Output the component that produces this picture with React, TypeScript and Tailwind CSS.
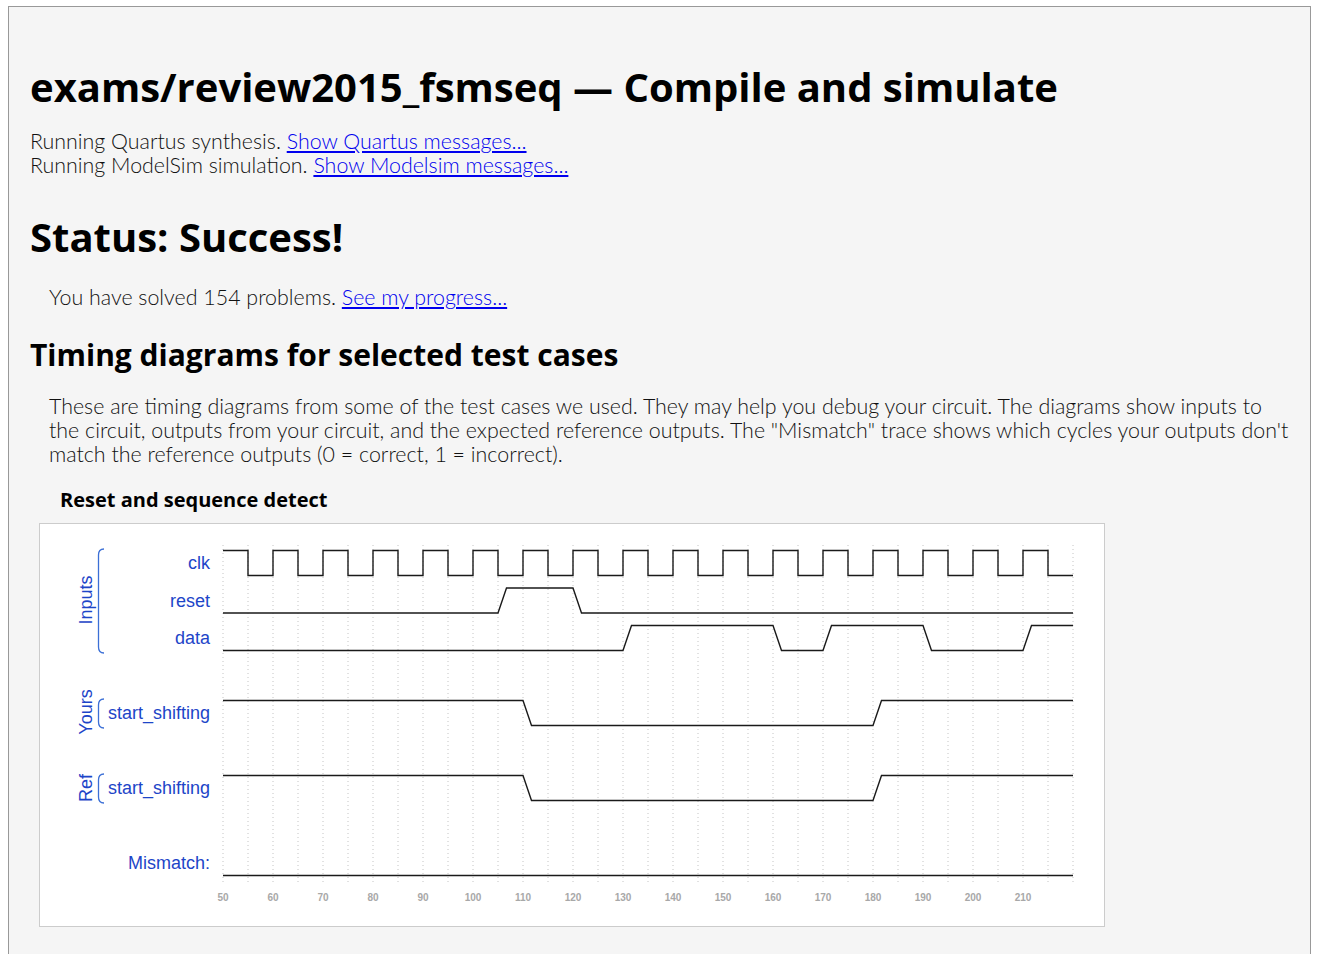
import React from "react"

// waveform geometry: 5px per time unit, t=50 at x=223
const X0 = 223
const PX = 5
const T_END = 220
const SLANT = 8.5
const tx = (t: number) => X0 + PX * (t - 50)

interface Signal {
  top: number
  start: 0 | 1
  edges: number[]
}

const signals: Signal[] = [
  { top: 588, start: 0, edges: [105, 120] }, // reset
  { top: 625.5, start: 0, edges: [130, 160, 170, 190, 210] }, // data
  { top: 700.5, start: 1, edges: [110, 180] }, // yours start_shifting
  { top: 775.5, start: 1, edges: [110, 180] }, // ref start_shifting
  { top: 850.5, start: 0, edges: [] }, // mismatch
]

function signalPath(s: Signal) {
  let v = s.start
  const y = (val: number) => (val ? s.top : s.top + 25)
  let d = `M${X0},${y(v)}`
  for (const t of s.edges) {
    const x = tx(t)
    d += ` L${x},${y(v)}`
    v = v ? 0 : 1
    d += ` L${x + SLANT},${y(v)}`
  }
  d += ` L${tx(T_END)},${y(v)}`
  return d
}

function clockPath() {
  const hi = 550.5
  const lo = 575.5
  let d = `M${X0},${hi}`
  for (let t = 50; t < T_END; t += 10) {
    d += ` H${tx(t + 5)} V${lo} H${tx(t + 10)}`
    if (t + 10 < T_END) d += ` V${hi}`
  }
  return d
}

function Bracket({ y1, y2 }: { y1: number; y2: number }) {
  return (
    <path
      d={`M104,${y1} Q98.5,${y1} 98.5,${y1 + 6} L98.5,${y2 - 6} Q98.5,${y2} 104,${y2}`}
      fill="none"
      stroke="#3b6fd6"
      strokeWidth={1.3}
    />
  )
}

function TimingDiagram() {
  const gridXs = Array.from({ length: 35 }, (_, i) => X0 + i * 25)
  const ticks = Array.from({ length: 17 }, (_, i) => 50 + i * 10)
  const labels = [
    { text: "clk", y: 563 },
    { text: "reset", y: 600.5 },
    { text: "data", y: 638 },
    { text: "start_shifting", y: 713 },
    { text: "start_shifting", y: 788 },
    { text: "Mismatch:", y: 863 },
  ]
  const font = { fontFamily: '"Liberation Sans", Arial, sans-serif' }

  return (
    <svg width="1064" height="402" viewBox="40 524 1064 402" className="block">
      {gridXs.map((x) => (
        <line key={x} x1={x} y1={545} x2={x} y2={882} stroke="#c4c4c4" strokeWidth={1} strokeDasharray="1 3" />
      ))}

      <path d={clockPath()} fill="none" stroke="#1a1a1a" strokeWidth={1.4} />
      {signals.map((s, i) => (
        <path key={i} d={signalPath(s)} fill="none" stroke="#1a1a1a" strokeWidth={1.4} />
      ))}

      {labels.map((l, i) => (
        <text key={i} x={210} y={l.y} textAnchor="end" dominantBaseline="central" fontSize={18} fill="#1d45c8" style={font}>
          {l.text}
        </text>
      ))}

      <Bracket y1={549} y2={653} />
      <Bracket y1={699} y2={728} />
      <Bracket y1={774} y2={803} />

      <text transform="translate(86,600) rotate(-90)" textAnchor="middle" dominantBaseline="central" fontSize={18} fill="#1d45c8" style={font}>
        Inputs
      </text>
      <text transform="translate(86,712) rotate(-90)" textAnchor="middle" dominantBaseline="central" fontSize={18} fill="#1d45c8" style={font}>
        Yours
      </text>
      <text transform="translate(86,788) rotate(-90)" textAnchor="middle" dominantBaseline="central" fontSize={18} fill="#1d45c8" style={font}>
        Ref
      </text>

      {ticks.map((t) => (
        <text key={t} x={tx(t)} y={897} textAnchor="middle" dominantBaseline="central" fontSize={10} fontWeight="bold" fill="#a8a8a8" style={font}>
          {t}
        </text>
      ))}
    </svg>
  )
}

export default function App() {
  const heading = "font-['Open_Sans',_'Noto_Sans',_sans-serif] font-bold text-black"
  const body = "font-['Lato',_'Open_Sans',_sans-serif] font-light text-[21.4px] leading-[24px] text-[#111]"
  const link = "text-[#0000ee] underline"

  return (
    <div className="min-h-screen bg-white px-[8px] pt-[6px]">
      <div className="h-[960px] border border-[#999] bg-[#f5f5f5] px-[21px]">
        <h1 className={`${heading} mt-[56px] text-[40px] leading-[48px]`}>
          exams/review2015_fsmseq — Compile and simulate
        </h1>

        <div className={`${body} mt-[18px]`}>
          <div>
            Running Quartus synthesis. <a href="#" className={link}>Show Quartus messages...</a>
          </div>
          <div>
            Running ModelSim simulation. <a href="#" className={link}>Show Modelsim messages...</a>
          </div>
        </div>

        <h1 className={`${heading} mt-[36px] text-[40px] leading-[48px]`}>Status: Success!</h1>

        <p className={`${body} mt-[24px] ml-[19px]`}>
          You have solved 154 problems. <a href="#" className={link}>See my progress...</a>
        </p>

        <h2 className={`${heading} mt-[28px] text-[30px] leading-[36px]`}>Timing diagrams for selected test cases</h2>

        <p className={`${body} mt-[21px] ml-[19px]`}>
          These are timing diagrams from some of the test cases we used. They may help you debug your circuit. The diagrams show inputs to
          <br />
          the circuit, outputs from your circuit, and the expected reference outputs. The "Mismatch" trace shows which cycles your outputs don't
          <br />
          match the reference outputs (0 = correct, 1 = incorrect).
        </p>

        <h3 className={`${heading} mt-[20px] ml-[30px] text-[20px] leading-[28px]`}>Reset and sequence detect</h3>

        <div className="mt-[9px] ml-[9px] w-[1066px] border border-[#ccc] bg-white">
          <TimingDiagram />
        </div>
      </div>
    </div>
  )
}
